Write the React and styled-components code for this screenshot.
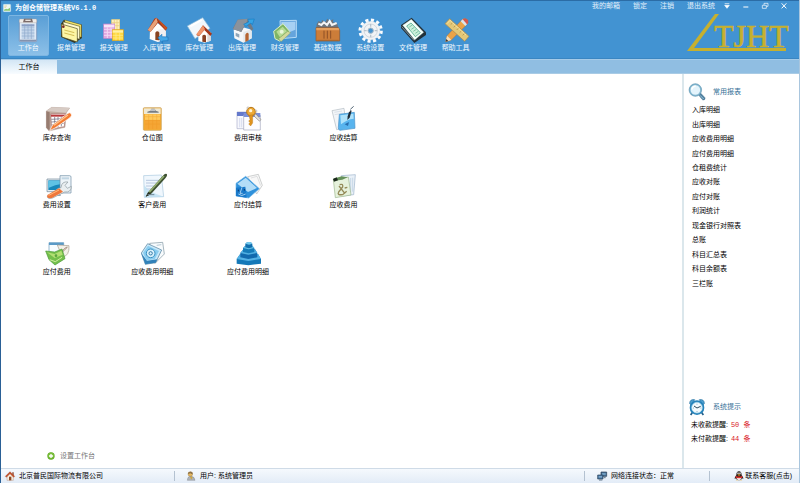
import React from 'react';
import styled, { createGlobalStyle } from 'styled-components';

//toolbar icons
const ClipboardIcon = () => (
  <svg viewBox="0 0 78 78">
    <rect x="13" y="8" width="52" height="66" rx="3" fill="#dfe9f5" stroke="#6f86ad" strokeWidth="2" />
    <rect x="13" y="6" width="52" height="11" rx="3" fill="#f0ece8" stroke="#a59c98" strokeWidth="1" />
    <path d="M27 5h24l3 11H24z" fill="#7c6c6a" />
    <path d="M31 8h16v4H31z" fill="#e8e2de" />
    <path d="M20 22h38v44H20z" fill="#c3d5ea" />
    <path d="M20 30h38M20 39h38M20 48h38M20 57h38M29 22v44M39 22v44M49 22v44" stroke="#8ea9cc" strokeWidth="2" />
    <path d="M20 22h38v5H20z" fill="#8b9fc4" />
    <path d="M14 68h50v5H14z" fill="#8492ae" />
  </svg>
);

const NotesIcon = () => (
  <svg viewBox="0 0 78 78">
    <path d="M18 8l54 15v40L50 78 9 60V20z" fill="#33382a" />
    <path d="M20 9l50 14v38L26 48z" fill="#f6e96e" stroke="#5a5526" strokeWidth="1" />
    <path d="M15 14l50 14v39L21 55z" fill="#fffbd0" stroke="#5a5526" strokeWidth="2" />
    <path d="M10 21l48 14v40L12 60z" fill="#fdf6a6" stroke="#4b4720" strokeWidth="2" />
    <path d="M19 39l30 8M19 48l30 8" stroke="#d3bd55" strokeWidth="3" />
    <circle cx="16" cy="29" r="4" fill="#7b2a25" />
  </svg>
);

const TablesIcon = () => (
  <svg viewBox="0 0 78 78">
    <rect x="32" y="8" width="24" height="33" fill="#fdf0bc" stroke="#f2d27c" strokeWidth="2" />
    <path d="M40 8v32M48 8v32M32 17h24M32 26h24" stroke="#eac977" strokeWidth="2" />
    <rect x="8" y="21" width="33" height="43" fill="#e0a6df" stroke="#c987cc" strokeWidth="2" />
    <path d="M9 23h31v8H9z" fill="#f9e4f8" />
    <path d="M9 37h31M9 46h31M9 55h31M19 31v32M30 31v32" stroke="#f5d7f4" strokeWidth="3" />
    <rect x="34" y="38" width="33" height="33" fill="#ffd83d" stroke="#e0a51f" strokeWidth="2" />
    <path d="M35 40h31v7H35z" fill="#fff0a6" />
    <path d="M35 55h31M35 63h31M45 47v23M56 47v23" stroke="#ffed97" strokeWidth="2" />
  </svg>
);

const HouseInIcon = () => (
  <svg viewBox="0 0 78 78">
    <path d="M18 34l17-20 30 22v30L41 75 17 66z" fill="#fffdfb" />
    <path d="M41 38l24-3v31l-24 9z" fill="#f1eff0" />
    <path d="M37 2l33 30-5 9-23-24-22 27-9-4L31 5z" fill="#a93817" />
    <path d="M37 2L11 39l9 5 21-29z" fill="#e8a179" />
    <path d="M38 3l26 35 6-5z" fill="#c75320" />
    <path d="M34 47q6-8 12 0v23l-12-1z" fill="#884220" />
    <path d="M42 62l12-10-1 7 19 1v11l-17 1 1 7z" fill="#45a7e7" stroke="#1d76bc" strokeWidth="2" />
  </svg>
);

const HousePaperIcon = () => (
  <svg viewBox="0 0 78 78">
    <path d="M4 27L50 2l22 32-45 31z" fill="#f2f8fc" stroke="#8fbbd8" strokeWidth="2" />
    <path d="M13 28L47 9" stroke="#fff" strokeWidth="6" />
    <path d="M37 52l14-20 23 14v25L56 77 37 72z" fill="#fffdf9" />
    <path d="M64 50l10-5v26l-10 4z" fill="#ded7d4" />
    <path d="M51 25l27 25-5 7-18-18-16 19-8-4z" fill="#a6361a" />
    <path d="M51 25L31 52l8 5 18-20z" fill="#ef9469" />
    <path d="M49 56q6-6 11 0v20l-11-2z" fill="#874022" />
  </svg>
);

const HouseOutIcon = () => (
  <svg viewBox="0 0 78 78">
    <path d="M14 38l22-9 32 9v26L43 77 16 64z" fill="#f5f7f9" />
    <path d="M43 45l25-9v28L43 77z" fill="#e4e9ec" />
    <path d="M11 35L26 8l32-3 15 31-6 5-16-22-14 26z" fill="#717a84" />
    <path d="M26 8l32-3-7 14-15 25-24-7z" fill="#8a929b" />
    <path d="M20 47l11 5v10l-11-5z" fill="#8fa5b8" />
    <path d="M49 53q5-9 10-3v20l-10 5z" fill="#b66432" />
    <path d="M44 22l15-7-3-8 20-1-6 17-4-5-15 10z" fill="#35a4e5" stroke="#187bc2" strokeWidth="2" />
  </svg>
);

const FinanceIcon = () => (
  <svg viewBox="0 0 78 78">
    <path d="M24 11l49-1v51l-47 4z" fill="#65a4dc" stroke="#b5dbf7" strokeWidth="3" />
    <path d="M28 15l42-1v24L29 55z" fill="#a6d0f3" />
    <path d="M5 43l28-23 20 23-30 29-14-7z" fill="#7fb565" stroke="#dbefc8" strokeWidth="3" />
    <path d="M13 44l19-15 13 14-21 18z" fill="#b8dc95" />
    <circle cx="29" cy="44" r="6" fill="#e9f6d8" />
    <path d="M20 65l27-22 9 4-29 27z" fill="#d2d99b" stroke="#71904e" strokeWidth="1" />
  </svg>
);

const ToolboxIcon = () => (
  <svg viewBox="0 0 78 78">
    <path d="M8 22l6-10 8 5 2-8 10 6 6-10 6 8 12-6-1 9 12 2 5 16H7z" fill="#6d747b" />
    <path d="M13 20l9 4 8-8 9 8 8-12 7 12 14-6" fill="none" stroke="#f3f5f6" strokeWidth="6" />
    <path d="M6 32h67l4 7v33H6z" fill="#cc7d39" stroke="#96582a" strokeWidth="2" />
    <path d="M7 33h67l2 7H7z" fill="#e5a15f" />
    <path d="M30 41v24M40 41v24M50 41v24" stroke="#8e5027" strokeWidth="3" />
    <path d="M10 70h64" stroke="#a5662f" strokeWidth="3" />
  </svg>
);

const GearIcon = () => (
  <svg viewBox="0 0 78 78">
    <circle cx="41" cy="41" r="31" fill="none" stroke="#fafcff" strokeWidth="11" strokeDasharray="9 7.2" />
    <circle cx="41" cy="41" r="28" fill="#f1f3f6" stroke="#c3d0dd" strokeWidth="1" />
    <circle cx="41" cy="41" r="20" fill="none" stroke="#d2d8df" strokeWidth="3" />
    <circle cx="41" cy="41" r="8" fill="#4593d0" stroke="#a7b7c5" strokeWidth="3" />
    <path d="M41 21v8M41 53v8M21 41h8M53 41h8" stroke="#b8c4ce" strokeWidth="4" />
  </svg>
);

const FileIcon = () => (
  <svg viewBox="0 0 78 78">
    <path d="M3 24L35 2l43 44v8L43 78 3 33z" fill="#22313a" />
    <path d="M8 25L34 7l37 39-27 23z" fill="#f6fff9" stroke="#a9c7c6" strokeWidth="1" />
    <path d="M20 27l13-9 28 29-15 12z" fill="#cdf0dc" stroke="#349b7f" strokeWidth="2" />
    <path d="M28 30l9-6M34 37l9-6M40 43l9-6M46 49l9-6" stroke="#55ad87" strokeWidth="2" />
    <path d="M5 29l37 41" stroke="#83939b" strokeWidth="3" />
  </svg>
);

const ToolsIcon = () => (
  <svg viewBox="0 0 78 78">
    <path d="M8 74l4-18L57 8q10-8 18 2 3 7-5 14L24 70z" fill="#eaa348" stroke="#a3652d" strokeWidth="1" />
    <path d="M58 8q10-8 17 2 3 7-5 14L56 10z" fill="#d35750" />
    <path d="M53 13l14 14 5-5L59 7z" fill="#d9e6ed" />
    <path d="M8 74l4-18 13 13z" fill="#f5dfbd" />
    <path d="M8 74l2-8 6 6z" fill="#403532" />
    <path d="M6 20L20 5l58 53-13 15z" fill="#e3c878" stroke="#a8874a" strokeWidth="2" />
    <path d="M12 20L21 10l48 44" fill="none" stroke="#f7e2a1" strokeWidth="3" />
    <path d="M28 18l-5 5M37 26l-5 5M46 34l-5 5M55 42l-5 5M64 50l-5 5" stroke="#a78338" strokeWidth="2" />
  </svg>
);

//workbench icons
const StockQueryIcon = () => (
  <svg viewBox="0 0 84 84">
    <path d="M10 18L26 7l54 2-10 14-4 44-48 11-8-10z" fill="#c2aca0" stroke="#9e877d" strokeWidth="1" />
    <path d="M10 18L26 7l54 2-12 14z" fill="#d7cbc4" />
    <path d="M10 19l10 3v55l-10-9z" fill="#977c70" />
    <path d="M23 27l44-1-3 39-38 7z" fill="#fff" stroke="#a7706a" strokeWidth="2" />
    <path d="M24 29h42v6H24z" fill="#b93a3c" />
    <path d="M25 43l39-2M25 51l38-3M26 60l36-5M35 36v33M45 36v31M55 35v29" stroke="#655e6f" strokeWidth="2" />
    <path d="M20 77l9-18 44-33q8-6 12 1 3 5-4 11L36 69z" fill="#f37b33" stroke="#fff" strokeWidth="2" />
    <path d="M33 61l42-31" stroke="#ffc48c" strokeWidth="4" />
  </svg>
);

const LocationIcon = () => (
  <svg viewBox="0 0 84 84">
    <rect x="16" y="8" width="54" height="68" rx="3" fill="#f4a92f" stroke="#c9a25c" strokeWidth="2" />
    <path d="M18 10h50v17H18z" fill="#efe9d4" />
    <path d="M28 20l9-3 3-6h10l3 6 9 3v3H28z" fill="#777d83" />
    <path d="M37 13h14v4H37z" fill="#e2e4e5" />
    <path d="M21 28h45v45H21z" fill="#ffc95a" />
    <path d="M21 35h45M21 46h45M21 57h45M32 28v45M44 28v45M56 28v45" stroke="#f4ae3e" strokeWidth="2" />
    <path d="M21 45h45v28H21z" fill="#ee8f1c" opacity=".6" />
  </svg>
);

const AuditIcon = () => (
  <svg viewBox="0 0 84 84">
    <path d="M9 21h46v50H9z" fill="#f7f8fd" stroke="#aaaecb" strokeWidth="2" />
    <path d="M9 21h46v12H9z" fill="#6479cb" />
    <path d="M29 31h50v44H29z" fill="#fcfcff" stroke="#a5a8bd" strokeWidth="2" />
    <path d="M29 24h50v12H29z" fill="#7b8fd8" />
    <path d="M17 39v28M23 39v28" stroke="#c8cee9" strokeWidth="2" />
    <path d="M65 26l16 18-5 4-16-15z" fill="#e8e5e1" stroke="#817e79" strokeWidth="2" />
    <circle cx="51" cy="20" r="13" fill="#edaa36" stroke="#b87719" strokeWidth="3" />
    <circle cx="50" cy="17" r="5" fill="#fff4d8" />
    <path d="M45 31l11-2v25l-6 9-6-6 4-4-4-5 4-4z" fill="#df931e" stroke="#ae6c10" strokeWidth="1" />
    <path d="M40 13q-4-9 4-7M63 15q8-2 5 8" fill="none" stroke="#c6c2bd" strokeWidth="3" />
  </svg>
);

const ReceivableIcon = () => (
  <svg viewBox="0 0 84 84">
    <path d="M9 17l36-7 7 55-29 9z" fill="#f2f5f8" stroke="#b2bbc3" strokeWidth="2" />
    <path d="M16 22l23-4M17 29l23-4" stroke="#cfd6df" strokeWidth="2" />
    <path d="M31 28l45-6 2 48-45 6q-6-2-5-8z" fill="#58b4ee" stroke="#4a92c9" strokeWidth="2" />
    <path d="M34 31l39-5 1 15q-20 2-38 17z" fill="#aee2fb" />
    <path d="M47 58l13-7-3 12z" fill="#286eaf" />
    <path d="M56 34l6-19 6 2-6 21-7 7z" fill="#1f2d3a" />
    <path d="M64 13l10-9" stroke="#516474" strokeWidth="3" />
    <circle cx="61" cy="17" r="3" fill="#fff" />
  </svg>
);

const FeeSettingIcon = () => (
  <svg viewBox="0 0 84 84">
    <path d="M12 21h50v38H12z" fill="#e7edf2" stroke="#6b8396" strokeWidth="2" />
    <path d="M16 25h42v29H16z" fill="#1787ba" />
    <path d="M16 26h42v9q-22 2-42 13z" fill="#5fc2e4" />
    <path d="M33 58h10v9H33zM22 67h31v5H22z" fill="#95a4b0" />
    <path d="M51 11h29q4 0 4 4v48H51z" fill="#edf4f8" stroke="#6c8da3" strokeWidth="2" />
    <path d="M56 16h22v6H56z" fill="#c1d6e3" />
    <path d="M13 73l33-24 8-2q2-20 21-17l-9 10 7 9 12-6q0 19-20 17L29 78q-16 4-16-5z" fill="#e9eef0" stroke="#8b999e" strokeWidth="2" />
    <path d="M13 69l35-20 12 10-33 19q-17 4-14-9z" fill="#ef773b" />
    <path d="M17 70l31-16" stroke="#ffbd7d" strokeWidth="3" />
  </svg>
);

const ClientFeeIcon = () => (
  <svg viewBox="0 0 84 84">
    <path d="M17 11l53-2 7 65-58 2z" fill="#f0f7fd" stroke="#a9c8df" strokeWidth="2" />
    <path d="M24 25h40M24 33h43M24 42h32M24 51h26" stroke="#9bb1d2" strokeWidth="2" />
    <path d="M19 40q12 21 58 34l-58 2z" fill="#bcdff1" opacity=".8" />
    <path d="M29 62L76 10q8-7 11-3 2 5-5 12L39 66l-16 8z" fill="#3e5132" />
    <path d="M34 60L78 12" stroke="#94af70" strokeWidth="5" />
    <path d="M23 74l8-13 8 6z" fill="#282d22" />
    <path d="M29 68h20" stroke="#718793" strokeWidth="3" />
  </svg>
);

const PayableIcon = () => (
  <svg viewBox="0 0 84 84">
    <path d="M41 14l32-7 12 33-17 26z" fill="#f8f8f8" stroke="#b7b9ba" strokeWidth="2" />
    <path d="M51 18l18-5 11 28" fill="none" stroke="#d2d3d4" strokeWidth="2" />
    <path d="M6 34l29-21 41 37-32 28-38-6z" fill="#2f91db" stroke="#71b5e7" strokeWidth="2" />
    <path d="M10 35l25-18 34 31-27 12z" fill="#b3ddf8" />
    <path d="M6 47l28-3 4 33-32-5z" fill="#1979ca" />
    <path d="M24 46l-6 18h8M13 66q10 9 22 0" fill="none" stroke="#e5f6ff" strokeWidth="2" />
    <path d="M13 53v5M31 51v5" stroke="#0c376a" strokeWidth="3" />
  </svg>
);

const ReceivableFeeIcon = () => (
  <svg viewBox="0 0 84 84">
    <path d="M37 11l42-3-5 60-32 4z" fill="#eaf1f8" stroke="#9bb2ca" strokeWidth="2" />
    <path d="M65 18v43M71 17v42" stroke="#b4ccdf" strokeWidth="2" />
    <path d="M13 22l45-7 8 54-47 8z" fill="#e6f2dc" stroke="#9bb78c" strokeWidth="2" />
    <path d="M13 20l25-7 18 3-16 7-24 3z" fill="#66925a" />
    <path d="M12 21l11-5 4 9-12 4z" fill="#1c2a1d" />
    <path d="M32 38q11-4 9 7L29 60q-6 10 12 8l12-10M30 42l18 23M47 48l8-2" fill="none" stroke="#948a58" strokeWidth="4" />
  </svg>
);

const PayableFeeIcon = () => (
  <svg viewBox="0 0 84 84">
    <path d="M18 11h44v47H18z" fill="#f7fcff" stroke="#6697ba" strokeWidth="2" />
    <path d="M18 11h44v7H18z" fill="#5a9ac7" />
    <path d="M43 18l35 2q2 31-20 34z" fill="#f3f0e8" stroke="#a69c8b" strokeWidth="2" />
    <path d="M49 48l25-24M57 50q-2-19 15-26" fill="none" stroke="#8a6958" strokeWidth="2" />
    <path d="M8 36l27 3 22-9 9 29-30 19-18-16z" fill="#74bf4b" stroke="#4c9a3a" strokeWidth="2" />
    <path d="M12 40l23 5 20-10 4 12-24 10z" fill="#b2df72" />
    <path d="M20 62l17 6 20-13" fill="none" stroke="#d1f0a0" strokeWidth="3" />
    <circle cx="39" cy="50" r="4" fill="#5ba33f" />
  </svg>
);

const ReceivableDetailIcon = () => (
  <svg viewBox="0 0 84 84">
    <path d="M35 13l39-3 5 35-28 28z" fill="#f8fbfd" stroke="#7b929f" strokeWidth="2" />
    <path d="M10 42l19-28 42 19-18 38-31 5z" fill="#c9e9fa" stroke="#4e7b98" strokeWidth="2" />
    <path d="M10 43l12 33 31-5 5-10-31 4z" fill="#3282b9" />
    <path d="M15 41l15-21 33 16-13 25-25 3z" fill="#8acdf0" />
    <circle cx="38" cy="43" r="13" fill="#d8f1fc" stroke="#3a91c3" strokeWidth="3" />
    <circle cx="38" cy="43" r="5" fill="none" stroke="#397ca8" strokeWidth="3" />
    <path d="M56 19l14-2" stroke="#b3c7d1" strokeWidth="3" />
  </svg>
);

const PayableDetailIcon = () => (
  <svg viewBox="0 0 84 84">
    <path d="M8 60l10-14 54-1 9 15v14l-38 5-35-5z" fill="#1478b8" />
    <path d="M8 60l10-14 54-1 9 15-38 6z" fill="#54b2e5" />
    <path d="M19 42l8-10 36-1 7 11v13l-27 5-24-5z" fill="#126aae" />
    <path d="M19 42l8-10 36-1 7 11-27 5z" fill="#51b0e2" />
    <path d="M27 27l7-7h21l6 7v12l-17 4-17-4z" fill="#157bb9" />
    <path d="M27 27l7-7h21l6 7-17 4z" fill="#66c0e7" />
    <path d="M34 14l6-5h10l5 5v11l-10 3-11-3z" fill="#126ead" />
    <path d="M34 14l6-5h10l5 5-10 3z" fill="#73c8ed" />
  </svg>
);

//small icons
const AppIcon = () => (
  <svg viewBox="0 0 24 24">
    <rect x="1" y="1" width="22" height="22" rx="2" fill="#eef7ef" stroke="#c8e3ef" strokeWidth="1" />
    <path d="M3 17l6-3 5 2 7-5v9H3z" fill="#8ac774" />
    <path d="M4 6h8M4 10h5" stroke="#e8c48e" strokeWidth="2" />
  </svg>
);

const SearchIcon = () => (
  <svg viewBox="0 0 54 54">
    <path d="M31 35l6-6 14 15q2 5-3 7-4 1-6-2z" fill="#4d7f9f" stroke="#315e7c" strokeWidth="1" />
    <circle cx="22" cy="21" r="17" fill="#e4f4fc" stroke="#80b6cf" strokeWidth="5" />
    <circle cx="22" cy="21" r="19" fill="none" stroke="#4f819d" strokeWidth="1" />
    <path d="M11 20q2-10 12-11" fill="none" stroke="#fff" strokeWidth="4" />
    <path d="M36 37l11 11" stroke="#9cc4d9" strokeWidth="3" />
  </svg>
);

const ClockIcon = () => (
  <svg viewBox="0 0 54 54">
    <path d="M14 42l-6 9M40 42l6 9" stroke="#235f8a" strokeWidth="5" />
    <path d="M5 17q0-14 15-12L9 20zM49 17q0-14-15-12l11 15z" fill="#4ea1d0" stroke="#256f9f" strokeWidth="2" />
    <circle cx="27" cy="29" r="19" fill="#f5fbfe" stroke="#2783bb" strokeWidth="6" />
    <circle cx="27" cy="29" r="16" fill="none" stroke="#a3d6ec" strokeWidth="2" />
    <path d="M18 24l9 6 11-5" fill="none" stroke="#2b4a5d" strokeWidth="3" />
    <path d="M27 17v3M27 39v3M15 30h3M37 30h3" stroke="#5493b5" strokeWidth="2" />
  </svg>
);

const AddIcon = () => (
  <svg viewBox="0 0 24 24">
    <circle cx="12" cy="12" r="11" fill="#5eaa22" />
    <circle cx="12" cy="11" r="9" fill="#7cc03c" />
    <path d="M12 6v12M6 12h12" stroke="#fff" strokeWidth="4" />
  </svg>
);

const HomeIcon = () => (
  <svg viewBox="0 0 30 30">
    <path d="M22 4h4v10h-4z" fill="#87402a" />
    <path d="M6 14l9-10 10 10v14H6z" fill="#f7eee1" stroke="#a17156" strokeWidth="1" />
    <path d="M1 16L15 2l14 14-3 3L15 8 4 19z" fill="#cc5329" stroke="#82301a" strokeWidth="1" />
    <path d="M12 17h7v11h-7z" fill="#8b4b29" />
  </svg>
);

const UserIcon = () => (
  <svg viewBox="0 0 30 30">
    <path d="M4 28q1-13 10-12 12 0 13 12z" fill="#aeb2b7" stroke="#686d72" strokeWidth="1" />
    <path d="M12 17l4 9 4-9z" fill="#d4a633" />
    <circle cx="13" cy="9" r="7" fill="#e5b75f" stroke="#866227" strokeWidth="1" />
    <path d="M6 9q0-8 9-7 6 1 5 8-6-1-8-4-2 4-6 3z" fill="#8a7048" />
  </svg>
);

const NetworkIcon = () => (
  <svg viewBox="0 0 30 30">
    <path d="M12 3h17v13H12z" fill="#486f94" stroke="#273e56" strokeWidth="2" />
    <path d="M15 6h11v6H15z" fill="#6f9cc0" />
    <path d="M2 12h16v12H2z" fill="#47749f" stroke="#2b435b" strokeWidth="2" />
    <path d="M5 15h10v5H5z" fill="#7ba6c9" />
    <path d="M6 27h10M20 20h6" stroke="#637789" strokeWidth="3" />
  </svg>
);

const PenguinIcon = () => (
  <svg viewBox="0 0 30 30">
    <path d="M7 13q0-12 8-12t8 12q6 6 5 11l-4-2q-1 6-9 6t-9-6l-4 2q-1-5 5-11z" fill="#1e1b1c" />
    <path d="M8 18q7 4 14 0 1 9-7 9t-7-9z" fill="#fff" />
    <ellipse cx="12" cy="7" rx="2" ry="3" fill="#fff" />
    <ellipse cx="18" cy="7" rx="2" ry="3" fill="#fff" />
    <path d="M10 11q5-2 10 0-5 5-10 0z" fill="#f5aa20" />
    <path d="M5 14q10 5 20 0v6q-10 4-20 0z" fill="#d72e28" />
    <path d="M5 28q4-4 9 0zM16 28q5-4 9 0z" fill="#eda31e" />
  </svg>
);

const Logo = () => (
  <LogoSvg viewBox="0 0 104 40" role="img" aria-label="TJHT">
    <path d="M0 37L28 0h4L7 34h92v3z" fill="#c6b02f" />
    <text
      x="27"
      y="33"
      fontFamily="'Liberation Serif', serif"
      fontSize="32"
      fill="#c6b02f"
      stroke="#c6b02f"
      strokeWidth=".6"
    >
      TJHT
    </text>
  </LogoSvg>
);

const tools = [
  { name: '工作台', icon: <ClipboardIcon /> },
  { name: '报单管理', icon: <NotesIcon /> },
  { name: '报关管理', icon: <TablesIcon /> },
  { name: '入库管理', icon: <HouseInIcon /> },
  { name: '库存管理', icon: <HousePaperIcon /> },
  { name: '出库管理', icon: <HouseOutIcon /> },
  { name: '财务管理', icon: <FinanceIcon /> },
  { name: '基础数据', icon: <ToolboxIcon /> },
  { name: '系统设置', icon: <GearIcon /> },
  { name: '文件管理', icon: <FileIcon /> },
  { name: '帮助工具', icon: <ToolsIcon /> },
];

const shortcuts = [
  { name: '库存查询', icon: <StockQueryIcon /> },
  { name: '仓位图', icon: <LocationIcon /> },
  { name: '费用审核', icon: <AuditIcon /> },
  { name: '应收结算', icon: <ReceivableIcon /> },
  { name: '费用设置', icon: <FeeSettingIcon /> },
  { name: '客户费用', icon: <ClientFeeIcon /> },
  { name: '应付结算', icon: <PayableIcon /> },
  { name: '应收费用', icon: <ReceivableFeeIcon /> },
  { name: '应付费用', icon: <PayableFeeIcon /> },
  { name: '应收费用明细', icon: <ReceivableDetailIcon /> },
  { name: '应付费用明细', icon: <PayableDetailIcon /> },
];

const reports = [
  '入库明细',
  '出库明细',
  '应收费用明细',
  '应付费用明细',
  '仓租费统计',
  '应收对账',
  '应付对账',
  '利润统计',
  '现金银行对照表',
  '总账',
  '科目汇总表',
  '科目余额表',
  '三栏账',
];

const App = () => {
  return (
    <Frame>
      <GlobalStyle />
      <Header>
        <TitleBar>
          <Title>
            <AppIcon />
            为创仓储管理系统V6.1.0
          </Title>
          <TopLinks>
            <a href="#mail">我的邮箱</a>
            <a href="#lock">锁定</a>
            <a href="#logout">注销</a>
            <a href="#exit">退出系统</a>
          </TopLinks>
          <WindowButtons>
            <button aria-label="菜单">
              <svg viewBox="0 0 24 24">
                <path d="M5 5h14M5 10h14l-7 9z" fill="#fff" stroke="#fff" strokeWidth="2" />
              </svg>
            </button>
            <button aria-label="最小化">
              <svg viewBox="0 0 24 24">
                <path d="M4 15h15" stroke="#fff" strokeWidth="3" />
              </svg>
            </button>
            <button aria-label="还原">
              <svg viewBox="0 0 24 24">
                <path d="M9 9V4h12v9h-5M4 10h12v9H4z" fill="none" stroke="#fff" strokeWidth="2" />
              </svg>
            </button>
            <button aria-label="关闭">
              <svg viewBox="0 0 24 24">
                <path d="M5 4l14 15M19 4L5 19" stroke="#fff" strokeWidth="3" />
              </svg>
            </button>
          </WindowButtons>
        </TitleBar>
        <ToolRow>
          <Tools>
            {tools.map((tool, idx) => (
              <ToolButton key={tool.name} $active={idx === 0}>
                {tool.icon}
                {tool.name}
              </ToolButton>
            ))}
          </Tools>
          <Logo />
        </ToolRow>
      </Header>
      <TabBar>
        <Tab>工作台</Tab>
      </TabBar>
      <Body>
        <Workbench>
          <ShortcutGrid>
            {shortcuts.map((item) => (
              <Shortcut key={item.name}>
                {item.icon}
                {item.name}
              </Shortcut>
            ))}
          </ShortcutGrid>
          <SetupButton>
            <AddIcon />
            设置工作台
          </SetupButton>
        </Workbench>
        <Sidebar>
          <section>
            <SideTitle>
              <SearchIcon />
              常用报表
            </SideTitle>
            <ReportList>
              {reports.map((name) => (
                <li key={name}>
                  <a href="#report">{name}</a>
                </li>
              ))}
            </ReportList>
          </section>
          <section>
            <SideTitle>
              <ClockIcon />
              系统提示
            </SideTitle>
            <Notice>
              未收款提醒: <a href="#receive">50 条</a>
            </Notice>
            <Notice>
              未付款提醒: <a href="#pay">44 条</a>
            </Notice>
          </section>
        </Sidebar>
      </Body>
      <StatusBar>
        <Company>
          <HomeIcon />
          北京普民国际物流有限公司
        </Company>
        <CurrentUser>
          <UserIcon />
          用户: 系统管理员
        </CurrentUser>
        <Network>
          <NetworkIcon />
          网络连接状态：正常
        </Network>
        <Support>
          <PenguinIcon />
          <a href="#support">联系客服(点击)</a>
        </Support>
      </StatusBar>
    </Frame>
  );
};

const GlobalStyle = createGlobalStyle`
  * {
    box-sizing: border-box;
  }
  body {
    margin: 0;
    font-family: 'Liberation Sans', 'Noto Sans CJK SC', sans-serif;
    font-size: 7px;
    line-height: 10px;
    color: #000;
  }
  button {
    border: none;
    background: none;
    padding: 0;
    font: inherit;
    color: inherit;
    cursor: pointer;
  }
  a {
    color: inherit;
    text-decoration: none;
  }
  svg {
    display: block;
    flex-shrink: 0;
    overflow: visible;
  }
`;

const Frame = styled.div`
  min-height: 100vh;
  display: flex;
  flex-direction: column;
  background: #fff;
  border-left: 1px solid #2a6096;
  border-right: 1px solid #a9c6de;
`;

const Header = styled.header`
  background: #4293d2;
  border-top: 1px solid #2b6ca6;
  border-bottom: 1px solid #3a86c2;
`;

const TitleBar = styled.div`
  display: flex;
  height: 13px;
  padding: 1px 11px 0 2px;
  color: #e4f1fb;
`;

const Title = styled.h1`
  display: flex;
  align-items: center;
  gap: 4px;
  margin: 0 auto 0 0;
  font-family: 'Liberation Mono', 'Noto Sans CJK SC', monospace;
  font-size: 7px;
  color: #fff;
  svg {
    width: 8px;
    height: 8px;
  }
`;

const TopLinks = styled.nav`
  display: flex;
  gap: 13px;
  line-height: 8px;
  margin-right: 8px;
`;

const WindowButtons = styled.div`
  display: flex;
  gap: 11px;
  height: 8px;
  svg {
    width: 8px;
    height: 8px;
  }
`;

const ToolRow = styled.div`
  display: flex;
  justify-content: space-between;
  padding: 0 8px 2px 6px;
`;

const Tools = styled.nav`
  display: grid;
  grid-template-columns: repeat(11, 1fr);
  width: 470px;
  padding-top: 1px;
`;

const ToolButton = styled.button`
  display: flex;
  flex-direction: column;
  align-items: center;
  height: 41px;
  margin: 0 1px;
  padding-top: 1px;
  border: 1px solid ${({ $active }) => ($active ? '#7db6e2' : 'transparent')};
  border-radius: 2px;
  background: ${({ $active }) =>
    $active ? 'linear-gradient(#5a9fd6, #8cc0e8)' : 'none'};
  color: #f2f9fe;
  white-space: nowrap;
  svg {
    width: 26px;
    height: 26px;
  }
`;

const LogoSvg = styled.svg`
  width: 104px;
  height: 40px;
`;

const TabBar = styled.div`
  height: 15px;
  background: #90bee2;
  border-top: 1px solid #a5cbe8;
  border-bottom: 1px solid #a9cbe5;
`;

const Tab = styled.button`
  display: block;
  width: 56px;
  height: 14px;
  background: linear-gradient(#d3e6f5, #f8fcff);
`;

const Body = styled.div`
  flex: 1;
  display: flex;
`;

const Workbench = styled.main`
  flex: 1;
  display: flex;
  flex-direction: column;
  justify-content: space-between;
  padding: 31px 4px 7px 8px;
`;

const ShortcutGrid = styled.div`
  display: grid;
  grid-template-columns: repeat(7, 1fr);
  grid-auto-rows: 67px;
  & > :nth-child(4n + 1) {
    grid-column: 1;
  }
`;

const Shortcut = styled.button`
  display: flex;
  flex-direction: column;
  align-items: center;
  height: 38px;
  white-space: nowrap;
  svg {
    width: 28px;
    height: 28px;
  }
`;

const SetupButton = styled.button`
  display: flex;
  align-items: center;
  align-self: flex-start;
  gap: 5px;
  margin-left: 38px;
  color: #777;
  svg {
    width: 8px;
    height: 8px;
  }
`;

const Sidebar = styled.aside`
  width: 117px;
  display: flex;
  flex-direction: column;
  justify-content: space-between;
  padding: 9px 0 22px 4px;
  border-left: 2px solid #dbe7ec;
`;

const SideTitle = styled.h2`
  display: flex;
  align-items: center;
  gap: 7px;
  margin: 0 0 2px;
  font-size: 7px;
  font-weight: 400;
  color: #356f96;
  svg {
    width: 18px;
    height: 18px;
  }
`;

const ReportList = styled.ul`
  display: grid;
  height: 188px;
  margin: 0;
  padding: 0 0 0 4px;
  list-style: none;
  align-items: center;
`;

const Notice = styled.p`
  margin: 0;
  padding-left: 3px;
  line-height: 13px;
  a {
    margin-left: 1px;
    font-family: 'Liberation Mono', 'Noto Sans CJK SC', monospace;
    color: #d9202a;
  }
`;

const StatusBar = styled.footer`
  display: flex;
  align-items: center;
  height: 15px;
  background: linear-gradient(#f5f9fd, #e3ecf7);
  border-top: 1px solid #cfdbe7;
`;

const StatusCell = styled.div`
  display: flex;
  align-items: center;
  gap: 4px;
  white-space: nowrap;
  svg {
    width: 10px;
    height: 10px;
  }
`;

const Company = styled(StatusCell)`
  width: 174px;
  padding-left: 4px;
  border-right: 1px solid #b4c2d1;
`;

const CurrentUser = styled(StatusCell)`
  flex: 1;
  padding-left: 11px;
`;

const Network = styled(StatusCell)`
  width: 126px;
  padding-left: 12px;
  border-left: 1px solid #b4c2d1;
  border-right: 1px solid #b4c2d1;
`;

const Support = styled(StatusCell)`
  width: 89px;
  gap: 1px;
  padding-right: 7px;
  justify-content: flex-end;
`;

export default App;
